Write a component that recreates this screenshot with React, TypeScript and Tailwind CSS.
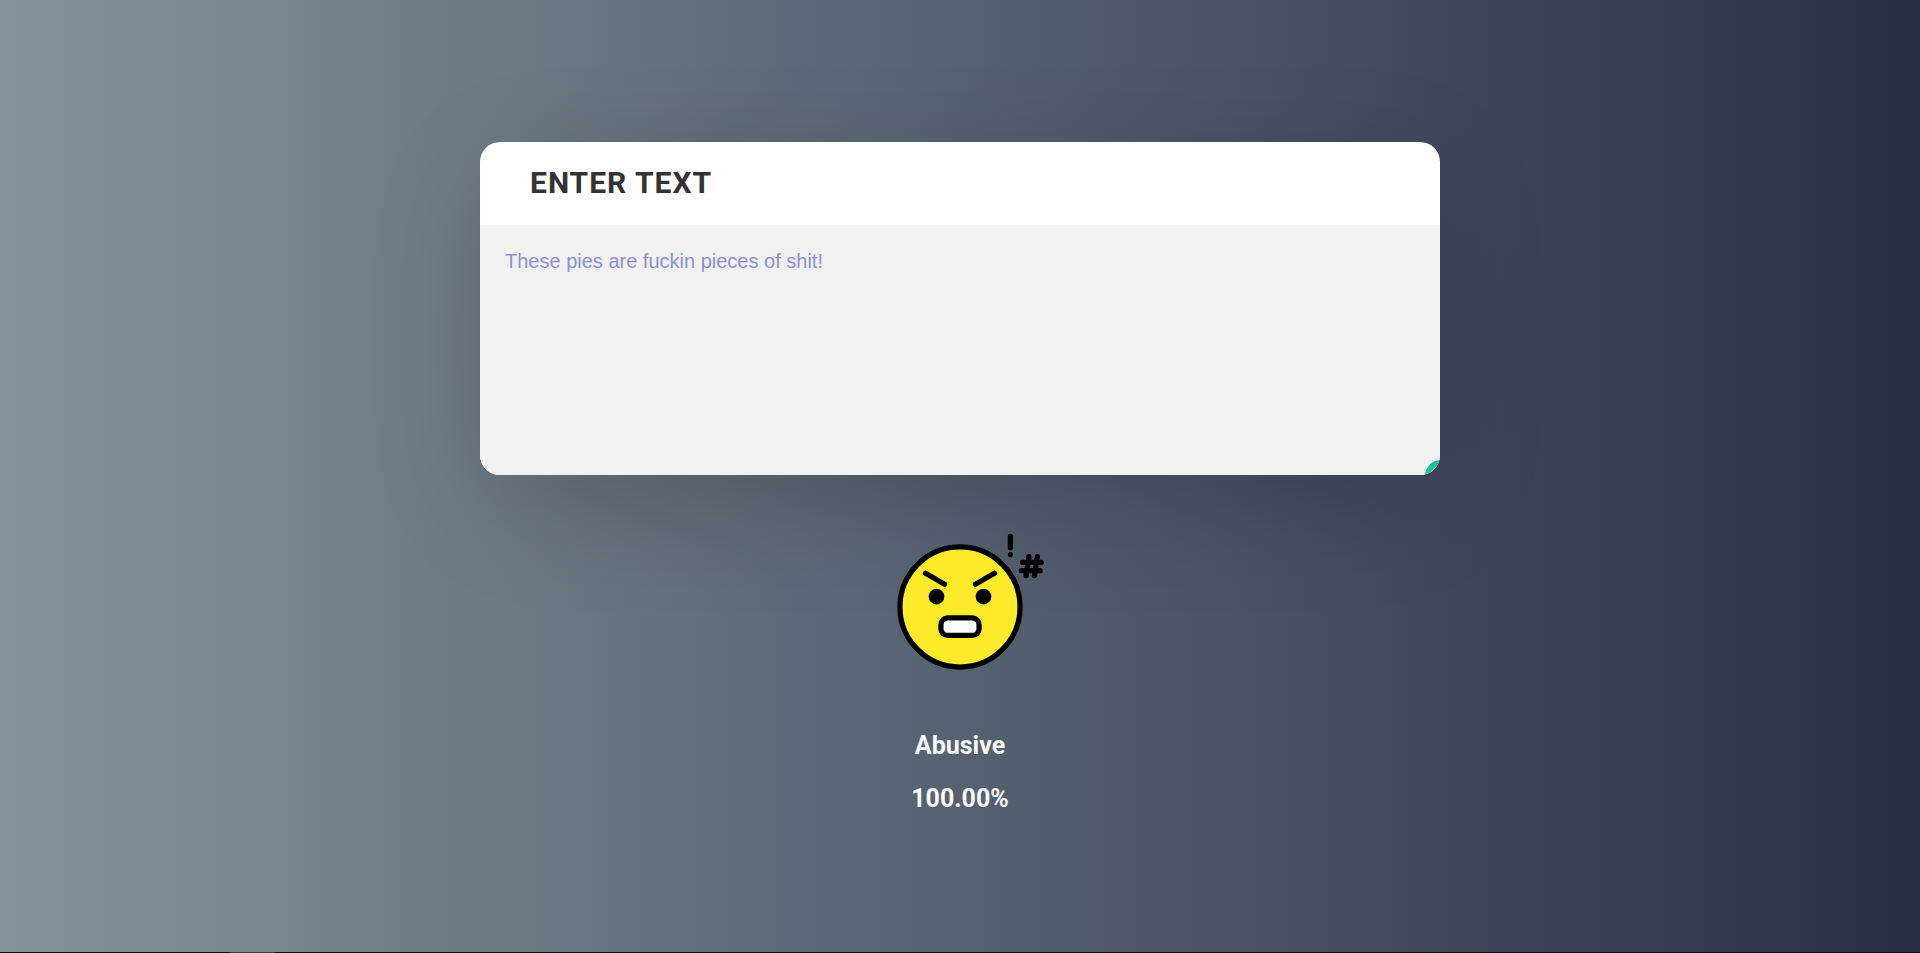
export default function App() {
  return (
    <main className="flex min-h-screen flex-col bg-linear-to-r/srgb from-[#859398] to-[#283048] font-[Roboto,sans-serif]">
      <div className="flex flex-1 flex-col items-center pt-[142px]">
        <section className="relative flex w-1/2 flex-col overflow-hidden rounded-[20px] bg-white shadow-[0_30px_120px_-10px_rgba(0,0,0,0.2)]">
          <label
            htmlFor="message"
            className="px-[50px] pt-[25px] pb-[26px] text-[30px] leading-8 font-bold tracking-[1px] text-[#333333] uppercase"
          >
            Enter text
          </label>
          <textarea
            id="message"
            spellCheck={false}
            defaultValue="These pies are fuckin pieces of shit!"
            className="block h-[250px] w-full resize-none bg-[#f1f1f1] p-[25px] font-['Liberation_Sans',Arial,sans-serif] text-[20px] leading-[23px] text-[#8e8ed8] outline-none"
          />
          <svg
            aria-hidden="true"
            viewBox="0 0 16 16"
            className="pointer-events-none absolute right-0 bottom-0 size-4"
          >
            <circle cx="17" cy="17" r="16" fill="#15c39a" />
            <circle cx="17" cy="17" r="10.7" fill="#ffffff" />
          </svg>
        </section>

        <svg
          role="img"
          aria-label="Abusive"
          viewBox="0 0 72 72"
          className="relative mt-[38px] size-[188px]"
          stroke="#000000"
          strokeWidth="2"
          strokeLinecap="round"
          strokeLinejoin="round"
          fill="none"
        >
          <circle cx="36" cy="36" r="23" fill="#fcea2b" />
          <path d="M22.8 23.1 30.1 27.3M49.2 23.1 41.9 27.3" />
          <circle cx="27" cy="32" r="3" fill="#000000" stroke="none" />
          <circle cx="45" cy="32" r="3" fill="#000000" stroke="none" />
          <rect x="28.7" y="40.2" width="14.6" height="6.7" rx="2.6" fill="#ffffff" />
          <path d="M55.3 8.9V13.3" />
          <circle cx="55.3" cy="15.9" r="1" fill="#000000" stroke="none" />
          <path d="M59.9 18.9H67.1M59.5 22.1H66.7M62.4 16.7 61.3 24M65.6 16.7 64.5 24" />
        </svg>

        <div className="mt-[29px] flex flex-col gap-[21px] text-center text-[25px] leading-8 font-bold text-[#f8f8f8]">
          <p>Abusive</p>
          <p>100.00%</p>
        </div>
      </div>
      <footer className="h-px bg-[#111111]">
        <div className="ml-[12%] h-px w-[45px] bg-[#3f3f3f]" />
      </footer>
    </main>
  );
}
